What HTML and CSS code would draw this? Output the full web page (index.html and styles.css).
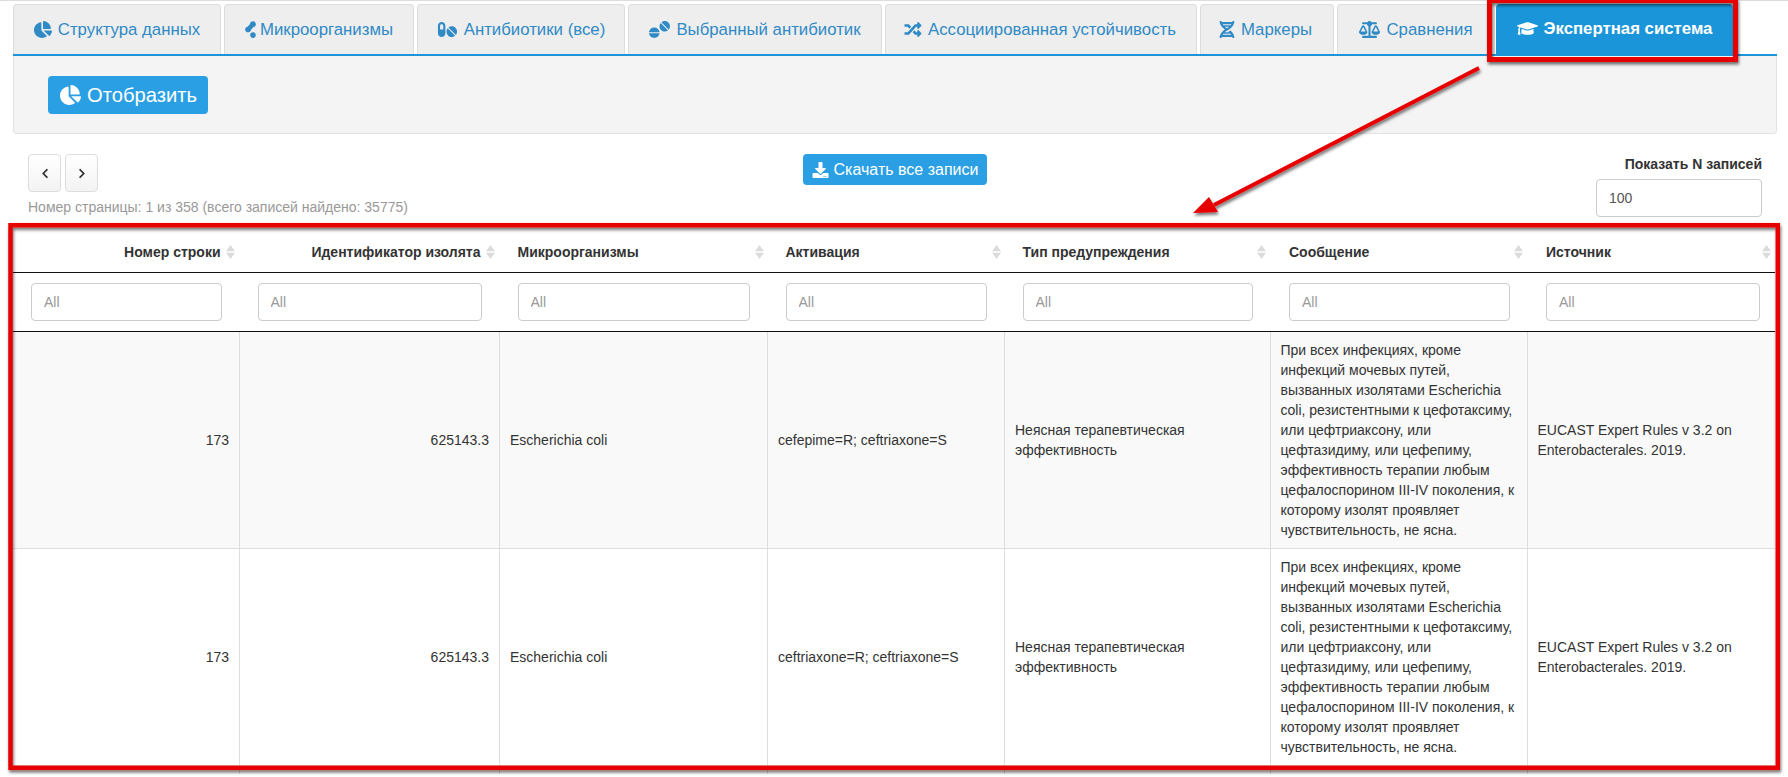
FILE: index.html
```html
<!DOCTYPE html>
<html lang="ru">
<head>
  <meta charset="UTF-8">
  <title>Экспертная система</title>
  <link rel="stylesheet" href="styles.css">
</head>
<body>
  <svg class="icon-defs" xmlns="http://www.w3.org/2000/svg">
    <symbol id="i-pie" viewBox="0 0 544 512"><path d="M527.79 288H290.5l158.03 158.03c6.04 6.04 15.98 6.53 22.19.68 38.7-36.46 65.32-85.61 73.13-140.86 1.34-9.46-6.51-17.85-16.06-17.85zm-15.83-64.8C503.72 103.74 408.26 8.28 288.8.04 279.68-.59 272 7.1 272 16.24V240h223.77c9.14 0 16.82-7.68 16.19-16.8zM224 288V50.71c0-9.55-8.39-17.4-17.84-16.06C86.99 51.49-4.1 155.6.14 280.37 4.5 408.51 114.83 513.59 243.03 511.98c50.4-.63 96.97-16.87 135.26-44.03 7.9-5.6 8.42-17.23 1.57-24.08L224 288z"/></symbol>
    <symbol id="i-micro" viewBox="0 0 320 512"><circle cx="235" cy="95" r="85"/><circle cx="85" cy="256" r="85"/><circle cx="235" cy="425" r="85"/><path d="M190 40l100 90-150 180-100-100z"/></symbol>
    <symbol id="i-pills" viewBox="0 0 576 512"><path d="M112 32C50.1 32 0 82.1 0 144v224c0 61.9 50.1 112 112 112s112-50.1 112-112V144c0-61.9-50.1-112-112-112zm48 224H64V144c0-26.5 21.5-48 48-48s48 21.5 48 48v112zm139.7-29.7c-3.5-3.5-9.4-3.1-12.3.8-45.3 62.5-40.4 150.1 15.9 206.4 56.3 56.3 143.9 61.2 206.4 15.9 4-2.9 4.3-8.8.8-12.3L299.7 226.3zm229.8-19c-56.3-56.3-143.9-61.2-206.4-15.9-4 2.9-4.3 8.8-.8 12.3l210.8 210.8c3.5 3.5 9.4 3.1 12.3-.8 45.3-62.6 40.5-150.1-15.9-206.4z"/></symbol>
    <symbol id="i-tablets" viewBox="0 0 640 512"><path d="M160 192C78.9 192 12.5 250.5.1 326.7c-.8 4.8 3.3 9.3 8.3 9.3h303.3c5 0 9.1-4.5 8.3-9.3C307.5 250.5 241.1 192 160 192zm151.6 176H8.4c-5 0-9.1 4.5-8.3 9.3C12.5 453.5 78.9 512 160 512s147.5-58.5 159.9-134.7c.8-4.8-3.3-9.3-8.3-9.3zM593.4 46.6c-56.5-56.5-144.2-61.4-206.9-16-4 2.9-4.3 8.9-.8 12.3L597 254.3c3.5 3.5 9.5 3.2 12.3-.8 45.5-62.7 40.6-150.4-15.9-206.9zM363 65.7c-3.5-3.5-9.5-3.2-12.3.8-45.4 62.7-40.5 150.4 15.9 206.9 56.5 56.5 144.2 61.4 206.9 15.9 4-2.9 4.3-8.9.8-12.3L363 65.7z"/></symbol>
    <symbol id="i-random" viewBox="0 0 512 512"><path d="M504.971 359.029c9.373 9.373 9.373 24.569 0 33.941l-80 79.984c-15.01 15.01-40.971 4.49-40.971-16.971V416h-58.785a12.004 12.004 0 0 1-8.773-3.812l-70.556-75.596 53.333-57.143L352 336h32v-39.981c0-21.438 25.943-31.998 40.971-16.971l80 79.981zM12 176h84l52.781 56.551 53.333-57.143-70.556-75.596A11.999 11.999 0 0 0 122.785 96H12c-6.627 0-12 5.373-12 12v56c0 6.627 5.373 12 12 12zm372 0v39.984c0 21.46 25.961 31.98 40.971 16.971l80-79.984c9.373-9.373 9.373-24.569 0-33.941l-80-79.981C409.943 24.021 384 34.582 384 56.019V96h-58.785a12.004 12.004 0 0 0-8.773 3.812L96 336H12c-6.627 0-12 5.373-12 12v56c0 6.627 5.373 12 12 12h110.785c3.326 0 6.503-1.381 8.773-3.812L352 176h32z"/></symbol>
    <symbol id="i-dna" viewBox="0 0 448 512"><path d="M.1 494.1c-1.1 9.5 6.3 17.8 15.9 17.8l32.3.1c8.1 0 14.9-5.9 16-13.9.7-4.9 1.8-11.1 3.4-18.1H380c1.6 6.9 2.9 13.2 3.5 18.1 1.1 8 7.9 14 16 13.9l32.3-.1c9.6 0 17.1-8.3 15.9-17.8-4.6-37.9-25.6-129-118.9-207.7-17.6 12.4-37.1 24.2-58.5 35.4 6.2 4.6 11.4 9.4 17 14.2H159.7c21.3-18.1 47-35.6 78.7-51.4C410.5 199.1 442.1 65.8 447.9 17.9 449 8.4 441.6.1 432 .1L399.6 0c-8.1 0-14.9 5.9-16 13.9-.7 4.9-1.8 11.1-3.4 18.1H67.8c-1.6-7-2.7-13.1-3.4-18.1-1.1-8-7.9-14-16-13.9L16.1.1C6.5.1-1 8.4.1 17.9 5.3 60.8 31.4 171.8 160 256 31.5 340.2 5.3 451.2.1 494.1zM224 219.6c-25.1-13.7-46.4-28.4-64.3-43.6h128.5c-17.8 15.2-39.1 30-64.2 43.6zM355.1 96c-5.8 10.4-12.8 21.1-21 32H114c-8.3-10.9-15.3-21.6-21-32h262.1zM92.9 416c5.8-10.4 12.8-21.1 21-32h219.4c8.3 10.9 15.4 21.6 21.2 32H92.9z"/></symbol>
    <symbol id="i-scale" viewBox="0 0 640 512"><path d="M256 336h-.02c0-16.18 1.34-8.73-85.05-181.51-17.65-35.29-68.19-35.36-85.87 0C-2.06 328.75.02 320.33.02 336H0c0 44.18 57.31 80 128 80s128-35.82 128-80zM128 176l72 144H56l72-144zm511.98 160c0-16.18 1.34-8.73-85.05-181.51-17.65-35.29-68.19-35.36-85.87 0-87.12 174.26-85.04 165.84-85.04 181.51H384c0 44.18 57.31 80 128 80s128-35.82 128-80h-.02zM440 320l72-144 72 144H440zm88 128H352V153.25c23.51-10.29 41.16-31.48 46.39-57.25H528c8.84 0 16-7.16 16-16V48c0-8.84-7.16-16-16-16H383.64C369.04 12.68 346.09 0 320 0s-49.04 12.68-63.64 32H112c-8.84 0-16 7.16-16 16v32c0 8.84 7.16 16 16 16h129.61c5.23 25.76 22.87 46.96 46.39 57.25V448H112c-8.84 0-16 7.16-16 16v32c0 8.84 7.16 16 16 16h416c8.84 0 16-7.16 16-16v-32c0-8.84-7.16-16-16-16z"/></symbol>
    <symbol id="i-cap" viewBox="0 0 640 512"><path d="M622.34 153.2L343.4 67.5c-15.2-4.67-31.6-4.67-46.79 0L17.66 153.2c-23.54 7.23-23.54 38.36 0 45.59l48.63 14.94c-10.67 13.19-17.23 29.28-17.88 46.9C38.78 266.15 32 276.11 32 288c0 10.78 5.68 19.85 13.86 25.65L20.33 428.53C18.11 438.52 25.71 448 35.94 448h56.11c10.24 0 17.84-9.48 15.62-19.47L82.14 313.65C90.32 307.85 96 298.78 96 288c0-11.57-6.47-21.25-15.66-26.87.76-15.02 8.44-28.3 20.69-36.72L296.6 284.5c9.06 2.78 26.44 6.25 46.79 0l278.95-85.7c23.55-7.24 23.55-38.36 0-45.6zM352.79 315.09c-28.53 8.76-52.84 3.92-65.59 0l-145.02-44.55L128 384c0 35.35 85.96 64 192 64s192-28.65 192-64l-14.18-113.47-145.03 44.56z"/></symbol>
    <symbol id="i-download" viewBox="0 0 512 512"><path d="M216 0h80c13.3 0 24 10.7 24 24v168h87.7c17.8 0 26.7 21.5 14.1 34.1L269.7 378.3c-7.5 7.5-19.8 7.5-27.3 0L90.1 226.1c-12.6-12.6-3.7-34.1 14.1-34.1H192V24c0-13.3 10.7-24 24-24zm296 376v112c0 13.3-10.7 24-24 24H24c-13.3 0-24-10.7-24-24V376c0-13.3 10.7-24 24-24h146.7l49 49c20.1 20.1 52.5 20.1 72.6 0l49-49H488c13.3 0 24 10.7 24 24zm-124 88c0-11-9-20-20-20s-20 9-20 20 9 20 20 20 20-9 20-20zm64 0c0-11-9-20-20-20s-20 9-20 20 9 20 20 20 20-9 20-20z"/></symbol>
    <symbol id="i-left" viewBox="0 0 320 512"><path d="M34.52 239.03L228.87 44.69c9.37-9.37 24.57-9.37 33.94 0l22.67 22.67c9.36 9.36 9.37 24.52.04 33.9L131.49 256l154.02 154.75c9.34 9.38 9.32 24.54-.04 33.9l-22.67 22.67c-9.37 9.37-24.57 9.37-33.94 0L34.52 272.97c-9.37-9.37-9.37-24.57 0-33.94z"/></symbol>
    <symbol id="i-right" viewBox="0 0 320 512"><path d="M285.476 272.971L91.132 467.314c-9.373 9.373-24.569 9.373-33.941 0l-22.667-22.667c-9.357-9.357-9.375-24.522-.04-33.901L188.505 256 34.484 101.255c-9.335-9.379-9.317-24.544.04-33.901l22.667-22.667c9.373-9.373 24.569-9.373 33.941 0L285.475 239.03c9.373 9.372 9.373 24.568.001 33.941z"/></symbol>
    <symbol id="i-sort" viewBox="0 0 9 14"><path d="M4.5 0L9 6.3H0zM4.5 14L0 7.7h9z"/></symbol>
  </svg>

  <div class="container">

    <!-- tabs -->
    <ul class="tabs">
      <li class="tab tab-1"><svg class="ic ic-pie"><use href="#i-pie"/></svg>Структура данных</li>
      <li class="tab tab-2"><svg class="ic ic-micro"><use href="#i-micro"/></svg>Микроорганизмы</li>
      <li class="tab tab-3"><svg class="ic ic-wide"><use href="#i-pills"/></svg>Антибиотики (все)</li>
      <li class="tab tab-4"><svg class="ic ic-wide"><use href="#i-tablets"/></svg>Выбранный антибиотик</li>
      <li class="tab tab-5"><svg class="ic ic-square"><use href="#i-random"/></svg>Ассоциированная устойчивость</li>
      <li class="tab tab-6"><svg class="ic ic-dna"><use href="#i-dna"/></svg>Маркеры</li>
      <li class="tab tab-7"><svg class="ic ic-wide"><use href="#i-scale"/></svg>Сравнения</li>
      <li class="tab tab-8 active"><svg class="ic ic-wide"><use href="#i-cap"/></svg>Экспертная система</li>
    </ul>

    <!-- action panel -->
    <div class="well">
      <button class="btn btn-show"><svg class="ic-show"><use href="#i-pie"/></svg>Отобразить</button>
    </div>

    <!-- pager and page size -->
    <div class="pager-row">
      <div class="pager">
        <div class="pager-btns">
          <button class="page-btn"><svg class="ic-chev"><use href="#i-left"/></svg></button>
          <button class="page-btn"><svg class="ic-chev"><use href="#i-right"/></svg></button>
        </div>
        <div class="page-info">Номер страницы: 1 из 358 (всего записей найдено: 35775)</div>
      </div>
      <button class="btn btn-download"><svg class="ic-dl"><use href="#i-download"/></svg>Скачать все записи</button>
      <div class="page-size">
        <label>Показать N записей</label>
        <input class="field" type="text" value="100">
      </div>
    </div>

    <!-- results -->
    <table class="results">
      <colgroup>
        <col class="c1"><col class="c2"><col class="c3"><col class="c4"><col class="c5"><col class="c6"><col class="c7">
      </colgroup>
      <thead>
        <tr class="head-row">
          <th class="num"><div class="th-in"><span>Номер строки</span><svg class="sort"><use href="#i-sort"/></svg></div></th>
          <th class="num"><div class="th-in"><span>Идентификатор изолята</span><svg class="sort"><use href="#i-sort"/></svg></div></th>
          <th><div class="th-in"><span>Микроорганизмы</span><svg class="sort"><use href="#i-sort"/></svg></div></th>
          <th><div class="th-in"><span>Активация</span><svg class="sort"><use href="#i-sort"/></svg></div></th>
          <th><div class="th-in"><span>Тип предупреждения</span><svg class="sort"><use href="#i-sort"/></svg></div></th>
          <th><div class="th-in"><span>Сообщение</span><svg class="sort"><use href="#i-sort"/></svg></div></th>
          <th><div class="th-in"><span>Источник</span><svg class="sort"><use href="#i-sort"/></svg></div></th>
        </tr>
        <tr class="filter-row">
          <td><input class="field" placeholder="All"></td>
          <td><input class="field" placeholder="All"></td>
          <td><input class="field" placeholder="All"></td>
          <td><input class="field" placeholder="All"></td>
          <td><input class="field" placeholder="All"></td>
          <td><input class="field" placeholder="All"></td>
          <td><input class="field" placeholder="All"></td>
        </tr>
      </thead>
      <tbody>
        <tr class="odd">
          <td class="num">173</td>
          <td class="num">625143.3</td>
          <td>Escherichia coli</td>
          <td>cefepime=R; ceftriaxone=S</td>
          <td>Неясная терапевтическая эффективность</td>
          <td>При всех инфекциях, кроме инфекций мочевых путей, вызванных изолятами Escherichia coli, резистентными к цефотаксиму, или цефтриаксону, или цефтазидиму, или цефепиму, эффективность терапии любым цефалоспорином III-IV поколения, к которому изолят проявляет чувствительность, не ясна.</td>
          <td>EUCAST Expert Rules v 3.2 on Enterobacterales. 2019.</td>
        </tr>
        <tr>
          <td class="num">173</td>
          <td class="num">625143.3</td>
          <td>Escherichia coli</td>
          <td>ceftriaxone=R; ceftriaxone=S</td>
          <td>Неясная терапевтическая эффективность</td>
          <td>При всех инфекциях, кроме инфекций мочевых путей, вызванных изолятами Escherichia coli, резистентными к цефотаксиму, или цефтриаксону, или цефтазидиму, или цефепиму, эффективность терапии любым цефалоспорином III-IV поколения, к которому изолят проявляет чувствительность, не ясна.</td>
          <td>EUCAST Expert Rules v 3.2 on Enterobacterales. 2019.</td>
        </tr>
        <tr class="next-row">
          <td></td><td></td><td></td><td></td><td></td><td></td><td></td>
        </tr>
      </tbody>
    </table>
  </div>

  <!-- red annotations drawn over the page -->
  <svg class="marks" width="1788" height="777" viewBox="0 0 1788 777">
    <defs>
      <filter id="drop" x="-5%" y="-5%" width="110%" height="110%">
        <feDropShadow dx="1" dy="2.5" stdDeviation="1.8" flood-color="#000" flood-opacity="0.55"/>
      </filter>
    </defs>
    <g filter="url(#drop)" fill="none" stroke="#e60606" stroke-width="4.5">
      <rect x="1489.5" y="0.5" width="246" height="59" stroke-width="5"/>
      <rect x="10.5" y="225.2" width="1767.3" height="542.6"/>
      <line x1="1479" y1="68" x2="1214" y2="205" stroke-width="4"/>
      <path d="M1193 213l16-16 9 15z" fill="#e60606" stroke="none"/>
    </g>
  </svg>
</body>
</html>
```

FILE: styles.css
```css
body {
  margin: 0;
  height: 777px;
  overflow: hidden;
  background: #fff;
  border-top: 1px solid #ddd;
  box-sizing: border-box;
  font-family: "Liberation Sans", Arial, sans-serif;
  font-size: 14px;
  line-height: 20px;
  color: #333;
}

.icon-defs {
  display: none;
}

.container {
  padding: 3px 11px 0 13px;
}

/* tabs */
.tabs {
  display: flex;
  margin: 0;
  padding: 0;
  list-style: none;
  border-bottom: 2px solid #1b95d9;
}
.tab {
  display: flex;
  align-items: center;
  justify-content: center;
  box-sizing: border-box;
  height: 50px;
  margin-right: 3px;
  background: #eee;
  border: 1px solid #ddd;
  border-bottom: none;
  border-radius: 4px 4px 0 0;
  font-size: 16.8px;
  color: #2f8ac6;
}
.tab-1 { width: 208px; }
.tab-2 { width: 190px; }
.tab-3 { width: 208px; }
.tab-4 { width: 254px; }
.tab-5 { width: 312px; padding-right: 2px; }
.tab-6 { width: 134px; padding-right: 3px; }
.tab-7 { width: 158px; margin-right: 1px; }
.tab-8 { width: 237px; margin-right: 0; }
.tab.active {
  height: 52px;
  margin-bottom: -2px;
  padding-bottom: 4px;
  background: #1b95d9;
  border-color: #1b95d9;
  color: #fff;
  font-weight: bold;
}
.ic {
  flex: none;
  height: 17px;
  margin-right: 6px;
  fill: currentColor;
}
.ic-pie { width: 18px; }
.ic-micro { width: 11px; margin-right: 4px; }
.ic-wide { width: 21px; }
.ic-square { width: 18px; }
.ic-dna { width: 16px; }

/* panel */
.well {
  box-sizing: border-box;
  height: 78px;
  padding: 20px 34px;
  background: #f4f4f4;
  border: 1px solid #e3e3e3;
  border-top: none;
  border-radius: 0 0 4px 4px;
}

.btn {
  display: inline-flex;
  align-items: center;
  border: none;
  border-radius: 4px;
  background: #2a9fe3;
  color: #fff;
  font-family: inherit;
  cursor: pointer;
}
.btn-show {
  height: 38px;
  padding: 0 11px 0 12px;
  font-size: 20.2px;
}
.ic-show {
  width: 21px;
  height: 20px;
  margin-right: 6px;
  fill: #fff;
}

/* pager row */
.pager-row {
  display: grid;
  grid-template-columns: 1fr auto 1fr;
  align-items: start;
  margin-top: 20px;
  padding: 0 15px;
}
.pager-btns {
  display: flex;
  gap: 4px;
}
.page-btn {
  display: flex;
  align-items: center;
  justify-content: center;
  width: 33px;
  height: 38px;
  padding: 0;
  background: linear-gradient(#fff, #f3f3f3);
  border: 1px solid #ddd;
  border-radius: 4px;
}
.ic-chev {
  width: 8px;
  height: 11px;
  fill: #333;
}
.page-info {
  margin-top: 5px;
  color: #999;
}
.btn-download {
  height: 31px;
  padding: 0 9px 0 9px;
  font-size: 16px;
}
.ic-dl {
  width: 17px;
  height: 16px;
  margin-right: 5px;
  fill: #fff;
}
.page-size {
  justify-self: end;
  width: 166px;
  text-align: right;
}
.page-size label {
  display: block;
  margin-bottom: 5px;
  font-weight: bold;
  white-space: nowrap;
}

.field {
  display: block;
  box-sizing: border-box;
  width: 100%;
  height: 38px;
  padding: 0 12px;
  border: 1px solid #ccc;
  border-radius: 4px;
  background: #fff;
  font-family: inherit;
  font-size: 14px;
  color: #555;
}
.field::placeholder {
  color: #999;
}

/* table */
.results {
  width: 1762px;
  margin-top: 15px;
  table-layout: fixed;
  border-collapse: collapse;
}
.c1 { width: 226.5px; }
.c2 { width: 260px; }
.c3 { width: 268px; }
.c4 { width: 237px; }
.c5 { width: 265.5px; }
.c6 { width: 257px; }
.c7 { width: 248px; }

.head-row th {
  height: 40px;
  padding: 0 4px 0 18px;
  border-bottom: 1px solid #111;
  font-weight: bold;
  text-align: left;
  vertical-align: middle;
}
.head-row th.num { padding-right: 5px; }
.head-row th:nth-child(6) { padding-left: 19px; }
.head-row th:nth-child(7) { padding-left: 19px; }
.th-in {
  display: flex;
  align-items: center;
  justify-content: space-between;
}
.num .th-in {
  justify-content: flex-end;
  gap: 5px;
}
.sort {
  flex: none;
  width: 9px;
  height: 14px;
  fill: #dcdcdc;
}
.filter-row td {
  padding: 10px 18px;
  border-bottom: 1px solid #111;
}
.filter-row td:nth-child(5) { padding-right: 17px; }
.filter-row td:nth-child(6) { padding-left: 19px; padding-right: 17px; }
.filter-row td:nth-child(7) { padding-left: 19px; padding-right: 15px; }
.results tbody td {
  padding: 8px 10px;
  border: 1px solid #ddd;
  vertical-align: middle;
}
.results tbody td:first-child {
  border-left: none;
}
.results tbody td:last-child {
  border-right: none;
}
.results tbody tr:first-child td {
  border-top: none;
}
.results td.num {
  text-align: right;
}
.odd td {
  background: #f9f9f9;
}
.results tbody .next-row td {
  height: 8px;
  padding: 0;
  border-bottom: none;
}

/* annotations */
.marks {
  position: absolute;
  left: 0;
  top: 0;
  pointer-events: none;
}
```
